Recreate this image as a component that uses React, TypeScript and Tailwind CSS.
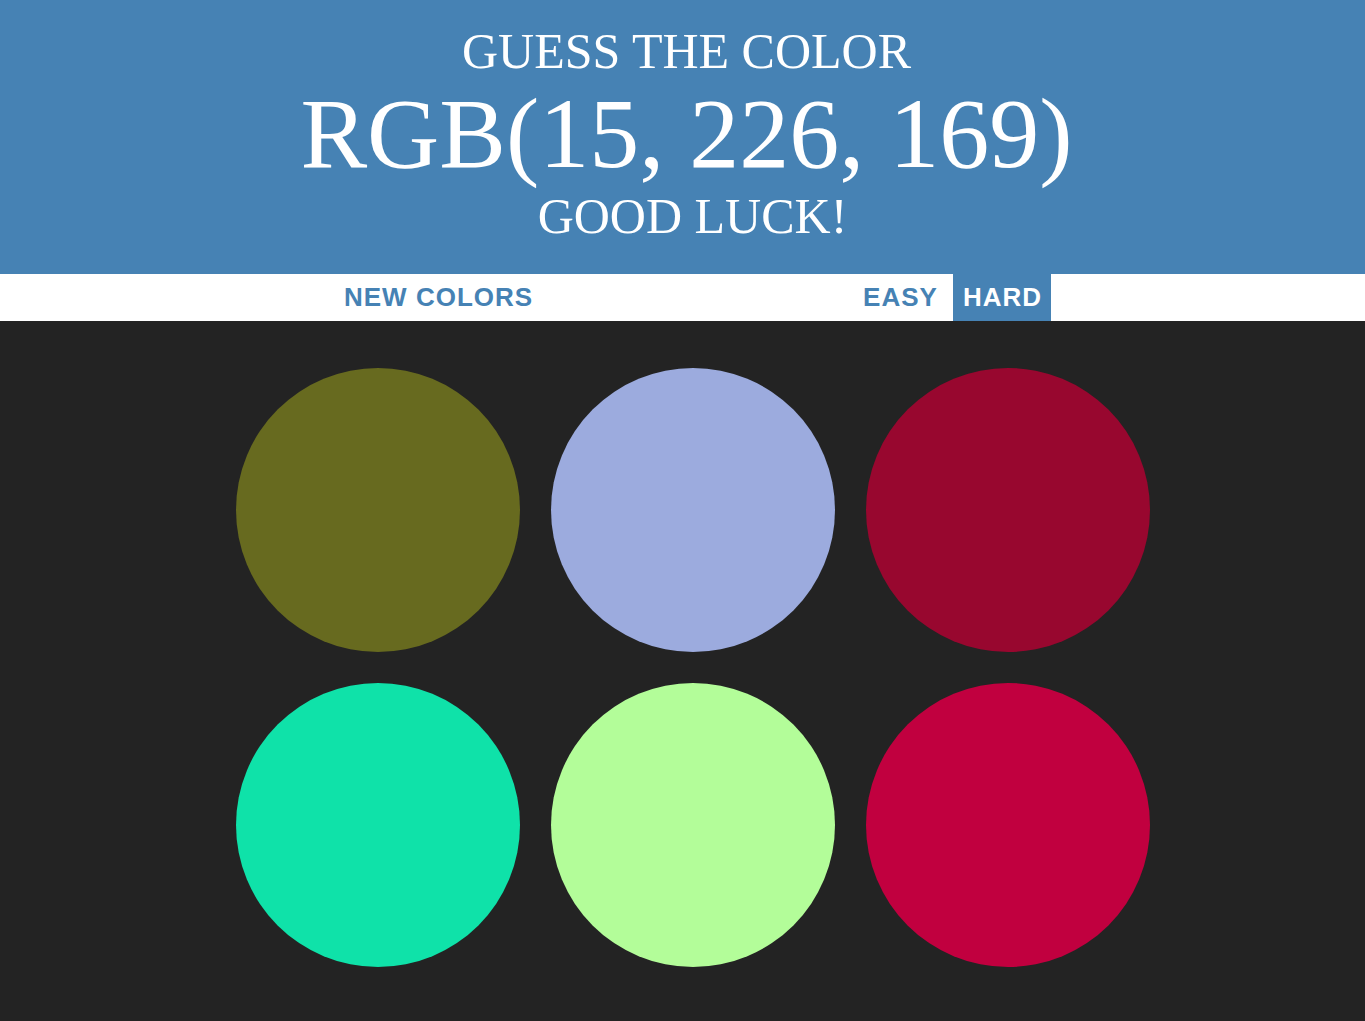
export default function App() {
  const colors = [
    "rgb(103, 106, 31)",
    "rgb(156, 171, 222)",
    "rgb(152, 7, 47)",
    "rgb(15, 226, 169)",
    "rgb(179, 253, 153)",
    "rgb(193, 0, 63)",
  ];
  return (
    <div className="min-h-[1021px] bg-[#232323] flex flex-col">
      <header
        className="h-[274px] bg-[#4682B4] text-white text-center uppercase pt-[24px] pl-[8px]"
        style={{ fontFamily: '"Liberation Serif", "Times New Roman", serif' }}
      >
        <div className="text-[50px] leading-[1.1]">Guess the color</div>
        <div className="text-[100px] leading-[1.1]">RGB(15, 226, 169)</div>
        <div className="text-[50px] leading-[1.1] pl-[12px]">Good luck!</div>
      </header>
      <div
        className="h-[47px] bg-white flex items-stretch pl-[334px] text-[26px] font-bold uppercase tracking-[1px]"
        style={{ fontFamily: '"Liberation Sans", Arial, sans-serif' }}
      >
        <button className="px-[10px] text-[#4682B4] leading-[47px] uppercase">New Colors</button>
        <div className="w-[310px]" />
        <button className="px-[10px] text-[#4682B4] leading-[47px] uppercase">Easy</button>
        <div className="w-[5px]" />
        <button className="pl-[10px] pr-[9px] bg-[#4682B4] text-white leading-[47px] uppercase">Hard</button>
      </div>
      <div className="ml-[236px] mt-[47px] grid grid-cols-[repeat(3,284px)] gap-[31px] w-max">
        {colors.map((c, i) => (
          <div key={i} className="w-[284px] h-[284px] rounded-full" style={{ backgroundColor: c }} />
        ))}
      </div>
    </div>
  );
}
